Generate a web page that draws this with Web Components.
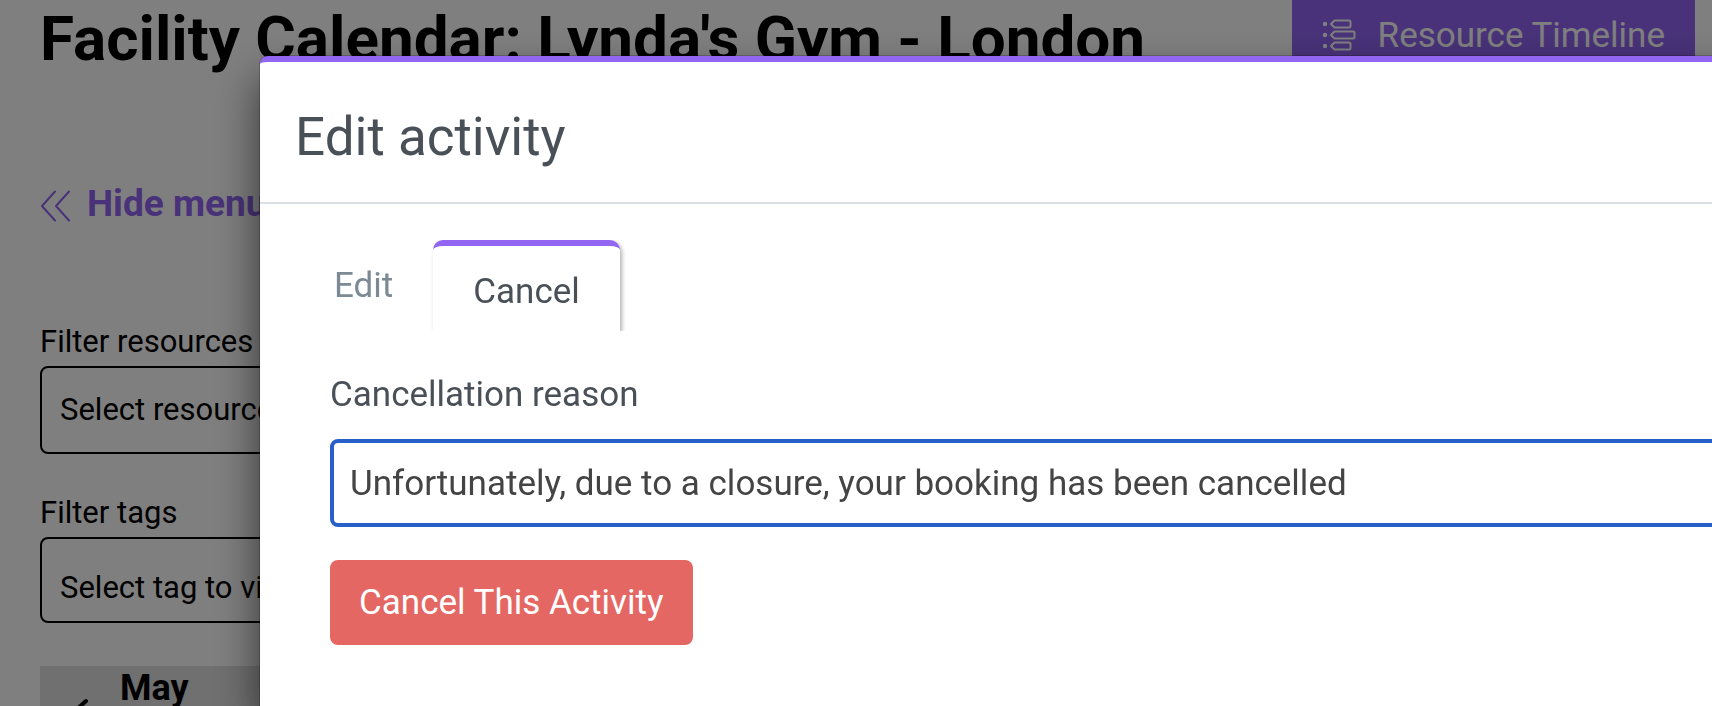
<!DOCTYPE html>
<html lang="en">
<head>
<meta charset="utf-8">
<title>Facility Calendar</title>
<style>
html, body { margin: 0; height: 100%; overflow: hidden; background: #fff; color: #000; font-family: Roboto, "Liberation Sans", sans-serif; }
</style>
</head>
<body>
<facility-page></facility-page>
<modal-layer>
  <modal-dialog heading="Edit activity">
    <tab-strip></tab-strip>
    <cancel-form></cancel-form>
  </modal-dialog>
</modal-layer>
<script>
function define(name, html) {
  customElements.define(name, class extends HTMLElement {
    constructor() {
      super();
      this.attachShadow({ mode: 'open' }).innerHTML = html;
    }
    connectedCallback() {
      for (const el of this.shadowRoot.querySelectorAll('[data-text]')) el.textContent = this.getAttribute(el.dataset.text);
      for (const el of this.shadowRoot.querySelectorAll('[data-hint]')) el.placeholder = this.getAttribute(el.dataset.hint);
    }
  });
}

define('timeline-button', `
<style>
:host { display: block; flex: none; }
button { display: flex; align-items: center; gap: 22px; height: 72px; border: 0; padding: 0 30px; background: #9265f2; color: #fff; font: 35px/40px Roboto, sans-serif; }
svg { display: block; }
</style>
<button type="button">
  <svg width="34" height="34" viewBox="0 0 34 34" fill="none" stroke="#fff" stroke-width="2" stroke-linejoin="round" aria-hidden="true">
    <g fill="#fff" stroke="none"><circle cx="3" cy="5" r="2.200"/><circle cx="3" cy="16" r="2.200"/><circle cx="3" cy="27" r="2.200"/></g>
    <path d="M12.500 1.500H27Q28.500 1.500 28.500 3V7Q28.500 8.500 27 8.500H12.500L9 5ZM12.500 12.500H31Q32.500 12.500 32.500 14V18Q32.500 19.500 31 19.500H12.500L9 16ZM12.500 23.500H27Q28.500 23.500 28.500 25V29Q28.500 30.500 27 30.500H12.500L9 27Z"/>
  </svg>
  <span>Resource Timeline</span>
</button>`);

define('filter-field', `
<style>
:host { display: block; }
label { display: block; font-size: 31px; line-height: 40px; margin-bottom: 4px; }
input { display: block; box-sizing: border-box; width: 100%; height: var(--field-height, 88px); padding: var(--field-pad, 0 18px 2px); border: 2px solid #000; border-radius: 8px; background: #fff; font: 31px/40px Roboto, sans-serif; }
input::placeholder { color: #000; opacity: 1; }
</style>
<label for="f" data-text="label"></label>
<input id="f" type="text" data-hint="hint">`);

define('mini-calendar', `
<style>
:host { display: block; background: #e0e0e0; height: 240px; }
header { display: flex; align-items: flex-start; gap: 32px; padding: 4px 34px; }
button { border: 0; padding: 26px 0 0; background: none; }
svg { display: block; }
strong { font-size: 36px; line-height: 36px; }
</style>
<header>
  <button type="button" aria-label="Previous month"><svg width="14" height="26" viewBox="0 0 14 26" fill="none" stroke="#000" stroke-width="4" stroke-linecap="round"><path d="M12 5L2 14L12 23"/></svg></button>
  <strong>May</strong>
</header>`);

define('facility-page', `
<style>
:host { display: block; height: 100vh; overflow: hidden; }
header { display: flex; justify-content: space-between; align-items: flex-start; padding: 0 17px 0 40px; }
h1 { margin: 0; font-size: 62px; line-height: 78px; font-weight: 700; white-space: nowrap; }
aside { width: 360px; padding: 104px 0 0 40px; }
a { display: flex; align-items: center; gap: 17px; color: #9265f2; font-size: 37px; line-height: 44px; font-weight: 700; text-decoration: none; white-space: nowrap; }
svg { display: block; margin-top: 4px; }
.resources { margin-top: 96px; }
.tags { margin-top: 39px; --field-height: 86px; --field-pad: 14px 18px 0; }
mini-calendar { margin-top: 43px; }
</style>
<header><h1>Facility Calendar: Lynda's Gym - London</h1><timeline-button></timeline-button></header>
<aside>
  <a href="#menu"><svg width="30" height="32" viewBox="0 0 30 32" fill="none" stroke="#9265f2" stroke-width="2" stroke-linecap="round" stroke-linejoin="round" aria-hidden="true"><path d="M15 1.500L2 16L15 30.500M29 1.500L16 16L29 30.500"/></svg><span>Hide menu</span></a>
  <filter-field class="resources" label="Filter resources" hint="Select resource"></filter-field>
  <filter-field class="tags" label="Filter tags" hint="Select tag to view"></filter-field>
  <mini-calendar></mini-calendar>
</aside>`);

define('modal-layer', `
<style>
:host { position: fixed; inset: 0; display: block; box-sizing: border-box; padding: 56px 0 0 260px; overflow: hidden; background: rgba(0, 0, 0, .5); }
</style>
<slot></slot>`);

define('modal-dialog', `
<style>
:host { display: block; box-sizing: border-box; min-height: 100%; margin-right: -100px; background: #fff; color: #495057; border-top: 6px solid #9265f2; border-radius: 8px 8px 0 0; box-shadow: 0 0 0 1px rgba(0, 0, 0, .2), 0 22px 44px rgba(0, 0, 0, .6); }
h2 { margin: 0; padding: 43px 35px 33px; font-size: 53px; line-height: 64px; font-weight: 400; border-bottom: 2px solid #dbe0e5; }
section { padding: 36px 70px; }
</style>
<h2 data-text="heading"></h2>
<section><slot></slot></section>`);

define('tab-strip', `
<style>
:host { display: block; }
div { display: flex; overflow: hidden; margin-left: -36px; }
button { border: 0; background: none; height: 91px; padding: 0 40px; font: 35px/44px Roboto, sans-serif; color: #7b8a94; }
.rest { padding-bottom: 0; }
.active { color: #495057; background: #fff; border-top: 6px solid #9265f2; border-radius: 10px 10px 0 0; padding-top: 6px; box-shadow: 2px 2px 4px rgba(0, 0, 0, .3); }
</style>
<div role="tablist">
  <button class="rest" type="button" role="tab" aria-selected="false">Edit</button>
  <button class="active" type="button" role="tab" aria-selected="true">Cancel</button>
</div>`);

define('cancel-form', `
<style>
:host { display: block; padding-top: 42px; }
form { display: flex; flex-direction: column; align-items: flex-start; }
label { font-size: 35px; line-height: 44px; }
input { box-sizing: border-box; width: 100%; height: 88px; margin: 22px 0 33px; padding: 0 16px; border: 4px solid #285fc9; border-radius: 8px; background: #fff; color: #444; font: 35px/44px Roboto, sans-serif; outline: 0; }
button { height: 85px; border: 0; border-radius: 8px; padding: 0 29px; background: #e46764; color: #fff; font: 35px/44px Roboto, sans-serif; }
</style>
<form>
  <label for="reason">Cancellation reason</label>
  <input id="reason" type="text" value="Unfortunately, due to a closure, your booking has been cancelled">
  <button type="button">Cancel This Activity</button>
</form>`);
</script>
</body>
</html>
